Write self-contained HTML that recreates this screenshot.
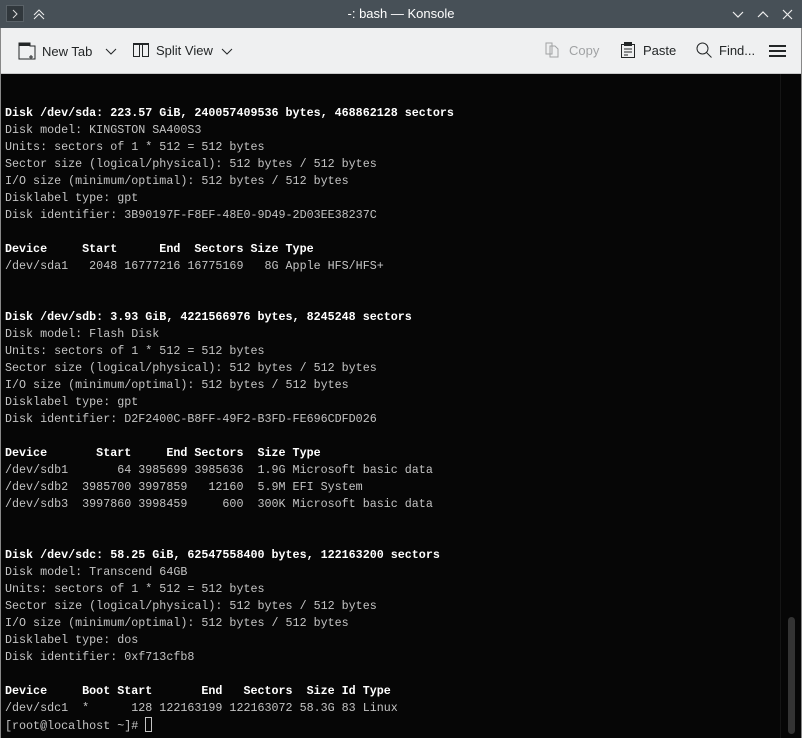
<!DOCTYPE html>
<html><head><style>
*{margin:0;padding:0;box-sizing:border-box}
body{width:802px;height:738px;overflow:hidden;background:#000;position:relative;font-family:"Liberation Sans",sans-serif}
#title{position:absolute;left:0;top:0;width:802px;height:28px;background:#475057;color:#fff;font-size:13px}
#tb{position:absolute;left:0;top:28px;width:802px;height:46px;background:#eff0f1;border-bottom:1px solid #c8c9ca;font-size:13px;color:#232627}
.b{position:absolute;top:14px;display:flex;align-items:center}
#term{position:absolute;left:1px;top:74px;width:800px;height:664px;background:#060606}
pre{position:absolute;left:5px;top:105px;font-family:"Liberation Mono",monospace;font-size:11.7px;line-height:17px;color:#c4c4c4}
pre b{color:#fff}
</style></head><body>
<div id="title">
<div style="position:absolute;left:6px;top:5px;width:18px;height:17px;background:#31383d;border:1px solid #5a6268"></div>
<svg style="position:absolute;left:9px;top:8px" width="12" height="12"><path d="M4 2l4 4-4 4" stroke="#ddd" fill="none"/></svg>
<svg style="position:absolute;left:32px;top:7px" width="14" height="14"><path d="M2 8l5-5 5 5M2 12l5-5 5 5" stroke="#eee" fill="none"/></svg>
<div style="position:absolute;left:0;width:802px;top:6px;text-align:center">-: bash — Konsole</div>
<svg style="position:absolute;left:730px;top:8px" width="70" height="14"><path d="M3 4l5 5 5-5M28 9l5-5 5 5M53 2l9 9M62 2l-9 9" stroke="#eee" fill="none" stroke-width="1.2"/></svg>
</div>
<div id="tb">
<div class="b" style="left:18px"><svg width="18" height="18"><path d="M1 1h11v3h5v13H1z" stroke="#232627" fill="none"/><path d="M1 1h11v3H1z" fill="#232627"/><path d="M13 13v4M11 15h4" stroke="#232627"/></svg><span style="margin-left:6px">New Tab</span></div>
<svg style="position:absolute;left:105px;top:20px" width="12" height="8"><path d="M1 1l5 5 5-5" stroke="#232627" fill="none"/></svg>
<div class="b" style="left:133px"><svg width="16" height="16"><rect x="0.5" y="1.5" width="6" height="13" stroke="#232627" fill="none"/><rect x="9.5" y="1.5" width="6" height="13" stroke="#232627" fill="none"/><path d="M0 2h16" stroke="#232627" stroke-width="2"/></svg><span style="margin-left:7px">Split View</span></div>
<svg style="position:absolute;left:221px;top:20px" width="12" height="8"><path d="M1 1l5 5 5-5" stroke="#232627" fill="none"/></svg>
<div class="b" style="left:545px;color:#a0a2a4"><svg width="15" height="16"><path d="M1 1h6v11H1zM5 4h5l3 3v8H5z" stroke="#a0a2a4" fill="#eff0f1"/></svg><span style="margin-left:9px">Copy</span></div>
<div class="b" style="left:621px"><svg width="14" height="16"><rect x="0.5" y="2.5" width="13" height="13" stroke="#232627" fill="none"/><rect x="3" y="0" width="8" height="4" fill="#232627"/><path d="M3 7h8M3 10h8M3 13h4" stroke="#232627"/></svg><span style="margin-left:8px">Paste</span></div>
<div class="b" style="left:696px"><svg width="16" height="16"><circle cx="6.5" cy="6.5" r="5.5" stroke="#232627" fill="none"/><path d="M10.5 10.5l5 5" stroke="#232627"/></svg><span style="margin-left:7px">Find...</span></div>
<svg style="position:absolute;left:769px;top:16px" width="18" height="14"><path d="M0 2h17M0 7h17M0 12h17" stroke="#232627" stroke-width="2"/></svg>
</div>
<div id="term">
<div style="position:absolute;left:779px;top:0;width:1px;height:664px;background:#151515"></div>
<div style="position:absolute;left:787px;top:543px;width:7px;height:117px;border-radius:4px;background:#333"></div>
</div>
<div style="position:absolute;left:801px;top:28px;width:1px;height:710px;background:#888"></div>
<div style="position:absolute;left:0;top:28px;width:1px;height:710px;background:#888"></div>
<pre><b>Disk /dev/sda: 223.57 GiB, 240057409536 bytes, 468862128 sectors</b>
Disk model: KINGSTON SA400S3 
Units: sectors of 1 * 512 = 512 bytes
Sector size (logical/physical): 512 bytes / 512 bytes
I/O size (minimum/optimal): 512 bytes / 512 bytes
Disklabel type: gpt
Disk identifier: 3B90197F-F8EF-48E0-9D49-2D03EE38237C

<b>Device     Start      End  Sectors Size Type</b>
/dev/sda1   2048 16777216 16775169   8G Apple HFS/HFS+


<b>Disk /dev/sdb: 3.93 GiB, 4221566976 bytes, 8245248 sectors</b>
Disk model: Flash Disk      
Units: sectors of 1 * 512 = 512 bytes
Sector size (logical/physical): 512 bytes / 512 bytes
I/O size (minimum/optimal): 512 bytes / 512 bytes
Disklabel type: gpt
Disk identifier: D2F2400C-B8FF-49F2-B3FD-FE696CDFD026

<b>Device       Start     End Sectors  Size Type</b>
/dev/sdb1       64 3985699 3985636  1.9G Microsoft basic data
/dev/sdb2  3985700 3997859   12160  5.9M EFI System
/dev/sdb3  3997860 3998459     600  300K Microsoft basic data


<b>Disk /dev/sdc: 58.25 GiB, 62547558400 bytes, 122163200 sectors</b>
Disk model: Transcend 64GB  
Units: sectors of 1 * 512 = 512 bytes
Sector size (logical/physical): 512 bytes / 512 bytes
I/O size (minimum/optimal): 512 bytes / 512 bytes
Disklabel type: dos
Disk identifier: 0xf713cfb8

<b>Device     Boot Start       End   Sectors  Size Id Type</b>
/dev/sdc1  *      128 122163199 122163072 58.3G 83 Linux
[root@localhost ~]# <span style="display:inline-block;width:7px;height:15px;border:1px solid #c4c4c4;vertical-align:-3px"></span></pre>
</body></html>
